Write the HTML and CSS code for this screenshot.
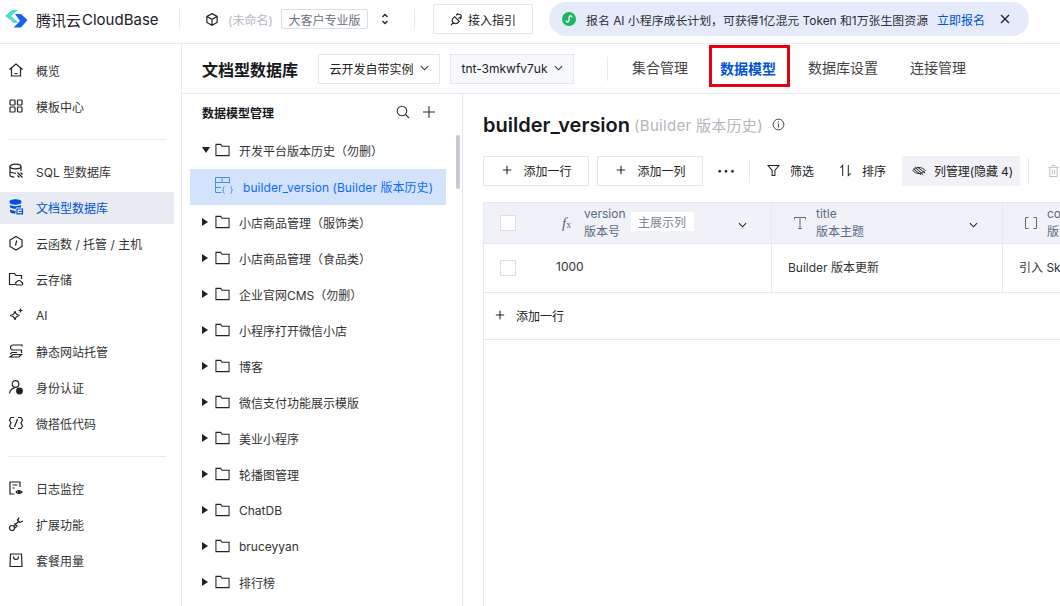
FILE: index.html
```html
<!DOCTYPE html>
<html lang="zh">
<head>
<meta charset="utf-8">
<title>CloudBase</title>
<link rel="stylesheet" href="styles.css">
</head>
<body>
<header class="top">
  <div class="brand">
    <svg class="logo" width="23" height="18" viewBox="0 0 23 18"><path d="M7 0h6L6 6l5 4.500H6L0 6z" fill="#4fdcd6"/><path d="M6 10.500h5l2 2H8z" fill="#2bc8e0"/><path d="M10 4h6l6.500 6L16 17.500H8.500L15 11z" fill="#1b62ee"/></svg>
    <span>腾讯云</span><span class="brand-en">CloudBase</span>
  </div>
  <i class="vline v1"></i>
  <svg class="cube" width="14" height="15" viewBox="0 0 15 15" fill="none" stroke="#222" stroke-width="1.300"><path d="M7.500 1.200 13 4.200v6.500l-5.500 3-5.500-3V4.200zM2 4.200l5.500 3 5.500-3M7.500 7.200v6.500"/></svg>
  <span class="env">(未命名)</span>
  <span class="plan">大客户专业版</span>
  <svg class="updown" width="10" height="14" viewBox="0 0 10 14" fill="none" stroke="#222" stroke-width="1.300"><path d="M2.500 5 5 2.500 7.500 5M2.500 9 5 11.500 7.500 9"/></svg>
  <i class="vline v2"></i>
  <button class="guide">
    <svg width="13" height="13" viewBox="0 0 14 14" fill="none" stroke="#222" stroke-width="1.200"><path d="M5 4 10 9 8.500 10.500a3.200 3.200 0 0 1-5-5zM3.500 10.500 1 13M7 2l1.500-1.500M9 6l3-2M6.500 2.500c1-1 3-1.500 5-.5 1 1.500.5 3.500-.5 5"/></svg>
    接入指引
  </button>
  <div class="banner">
    <svg class="mini" width="14" height="14" viewBox="0 0 14 14"><circle cx="7" cy="7" r="7" fill="#1fb45f"/><path d="M4 8.500a1.500 1.500 0 1 0 3 0v-3a1.500 1.500 0 1 1 3 0" fill="none" stroke="#fff" stroke-width="1.300"/></svg>
    <span class="banner-text">报名 AI 小程序成长计划，可获得1亿混元 Token 和1万张生图资源</span>
    <a class="banner-link">立即报名</a>
    <svg class="close" width="10" height="10" viewBox="0 0 10 10" stroke="#222" stroke-width="1.400"><path d="M1 1l8 8M9 1 1 9"/></svg>
  </div>
</header>

<div class="body">
  <nav class="side">
    <a class="nav"><svg viewBox="0 0 16 16"><path d="M1.500 7.500 8 2l6.500 5.500M3.500 6v8h9V6M6.500 11.500h3"/></svg>概览</a>
    <a class="nav"><svg viewBox="0 0 16 16"><rect x="2" y="2" width="5" height="5" rx=".8"/><rect x="9.500" y="2" width="4.500" height="5" rx=".8"/><rect x="2" y="9" width="5" height="5" rx=".8"/><rect x="9.500" y="9" width="4.500" height="5" rx=".8"/></svg>模板中心</a>
    <hr class="sep">
    <a class="nav"><svg viewBox="0 0 16 16"><ellipse cx="7.500" cy="3.500" rx="5.500" ry="2.300"/><path d="M2 3.500V12c0 1 2 2 4.500 2M13 3.500V8M2 8c0 1 2.500 2.300 6 2.300M9.500 9.500l5 5M12.500 9.500l2 2M9.500 12.500l2 2"/></svg>SQL 型数据库</a>
    <a class="nav active"><svg viewBox="0 0 16 16"><ellipse cx="7.500" cy="3" rx="5.500" ry="2.200" fill="#0052d9"/><path d="M2 6c2 1.500 9 1.500 11 0v2.500H8v1.300c-2.500 0-4.800-.5-6-1.500zM2 10.500c1.500 1 4 1.300 5.500 1.300V14.500c-2.500 0-4.500-.5-5.500-1.500z" fill="#0052d9" stroke="none"/><path d="M9 10h5.500v4.800H9zM11 12.500h3.500" fill="none"/></svg>文档型数据库</a>
    <a class="nav"><svg viewBox="0 0 16 16"><path d="M8 1.500 14 5v6.500L8 15l-6-3.500V5zM8.700 5.500 7.500 10.500"/></svg>云函数 / 托管 / 主机</a>
    <a class="nav"><svg viewBox="0 0 16 16"><path d="M7 13.500H1.500V2.500h5l1.500 2h5.500V8M8.500 14a1.800 1.800 0 0 1 .5-3.300 2.500 2.500 0 0 1 4.500.5A1.500 1.500 0 0 1 14 14z"/></svg>云存储</a>
    <a class="nav"><svg viewBox="0 0 16 16"><path d="M7 4c.5 3 1.500 4 4.500 4.500C8.500 9 7.500 10 7 13 6.500 10 5.500 9 2 8.500 5.500 8 6.500 7 7 4zM12.500 1.500v4M10.500 3.500h4"/></svg>AI</a>
    <a class="nav"><svg viewBox="0 0 16 16"><path d="M14 3.500V2H5a2.500 2.500 0 0 0-2.500 2.500C2.500 6 3.500 7 5 7h8.500v3M2 14l3-2.500h8.500L11 14zM2 11l2-1.500h5"/></svg>静态网站托管</a>
    <a class="nav"><svg viewBox="0 0 16 16"><circle cx="7.500" cy="5" r="3.300"/><path d="M1.500 14.500c.5-3 2.500-5 5-5.300"/><circle cx="11.500" cy="12" r="2.800" fill="#222"/></svg>身份认证</a>
    <a class="nav"><svg viewBox="0 0 16 16"><path d="M6 2.500H3L1.500 5 3 8 1.500 11 3 13.500h3M10 2.500h3L14.500 5 13 8l1.500 3-1.500 2.500h-3M9.500 4l-3 8"/></svg>微搭低代码</a>
    <hr class="sep">
    <a class="nav"><svg viewBox="0 0 16 16"><path d="M6.500 14H2V2h10v5M4.500 5h5M4.500 8h2"/><path d="M8 12c1-1.800 4.500-1.800 6 0-1.500 1.800-5 1.800-6 0z"/><circle cx="11" cy="12" r=".8" fill="#222"/></svg>日志监控</a>
    <a class="nav"><svg viewBox="0 0 16 16"><circle cx="4" cy="12" r="2.500"/><path d="M6 10 10.500 5.500M9 3.500l3.500 3.500M11 1.500 10 4M15 5l-2.500 1M6.500 7.500 9 10l-2 2"/></svg>扩展功能</a>
    <a class="nav"><svg viewBox="0 0 16 16"><path d="M2.500 2h11l.5 12.500H2zM5.500 4.500c0 4 5 4 5 0"/></svg>套餐用量</a>
  </nav>

  <div class="content">
    <div class="sub">
      <h1>文档型数据库</h1>
      <div class="select s1">云开发自带实例<svg class="chev" viewBox="0 0 10 6"><path d="M1 1l4 4 4-4"/></svg></div>
      <div class="select s2">tnt-3mkwfv7uk<svg class="chev" viewBox="0 0 10 6"><path d="M1 1l4 4 4-4"/></svg></div>
      <i class="vline v3"></i>
      <div class="tabs">
        <a class="tab">集合管理</a>
        <a class="tab current">数据模型</a>
        <a class="tab">数据库设置</a>
        <a class="tab">连接管理</a>
      </div>
    </div>

    <div class="panes">
      <aside class="tree">
        <div class="tree-head">
          <b>数据模型管理</b>
          <svg class="hicon" viewBox="0 0 14 14"><circle cx="6" cy="6" r="4.800"/><path d="M9.500 9.500 13 13"/></svg>
          <svg class="hicon plus" viewBox="0 0 14 14"><path d="M7 1v12M1 7h12"/></svg>
        </div>
        <div class="thumb"></div>
        <div class="row"><i class="tri down"></i><svg class="folder" viewBox="0 0 16 14"><path d="M1 1h5l1.500 2H15v10H1z"/></svg>开发平台版本历史（勿删）</div>
        <div class="row selected"><svg class="model" viewBox="0 0 19 18"><path d="M6.500 15.500H.5V.5h14v6M.5 5.500h14M.5 10.500h5.500M7 .5v5"/><path d="M9.500 9.500c-1 0-1 .7-1 1.700s0 1.500-1 1.800c1 .3 1 .8 1 1.800s0 1.700 1 1.700M15.500 9.500c1 0 1 .7 1 1.700s0 1.500 1 1.800c-1 .3-1 .8-1 1.800s0 1.700-1 1.700"/></svg>builder_version (Builder 版本历史)</div>
        <div class="row"><i class="tri"></i><svg class="folder" viewBox="0 0 16 14"><path d="M1 1h5l1.500 2H15v10H1z"/></svg>小店商品管理（服饰类）</div>
        <div class="row"><i class="tri"></i><svg class="folder" viewBox="0 0 16 14"><path d="M1 1h5l1.500 2H15v10H1z"/></svg>小店商品管理（食品类）</div>
        <div class="row"><i class="tri"></i><svg class="folder" viewBox="0 0 16 14"><path d="M1 1h5l1.500 2H15v10H1z"/></svg>企业官网CMS（勿删）</div>
        <div class="row"><i class="tri"></i><svg class="folder" viewBox="0 0 16 14"><path d="M1 1h5l1.500 2H15v10H1z"/></svg>小程序打开微信小店</div>
        <div class="row"><i class="tri"></i><svg class="folder" viewBox="0 0 16 14"><path d="M1 1h5l1.500 2H15v10H1z"/></svg>博客</div>
        <div class="row"><i class="tri"></i><svg class="folder" viewBox="0 0 16 14"><path d="M1 1h5l1.500 2H15v10H1z"/></svg>微信支付功能展示模版</div>
        <div class="row"><i class="tri"></i><svg class="folder" viewBox="0 0 16 14"><path d="M1 1h5l1.500 2H15v10H1z"/></svg>美业小程序</div>
        <div class="row"><i class="tri"></i><svg class="folder" viewBox="0 0 16 14"><path d="M1 1h5l1.500 2H15v10H1z"/></svg>轮播图管理</div>
        <div class="row"><i class="tri"></i><svg class="folder" viewBox="0 0 16 14"><path d="M1 1h5l1.500 2H15v10H1z"/></svg>ChatDB</div>
        <div class="row"><i class="tri"></i><svg class="folder" viewBox="0 0 16 14"><path d="M1 1h5l1.500 2H15v10H1z"/></svg>bruceyyan</div>
        <div class="row"><i class="tri"></i><svg class="folder" viewBox="0 0 16 14"><path d="M1 1h5l1.500 2H15v10H1z"/></svg>排行榜</div>
      </aside>

      <main class="main">
        <div class="title">
          <h2>builder_version</h2>
          <span class="alias">(Builder 版本历史)</span>
          <svg class="info" viewBox="0 0 14 14"><circle cx="7" cy="7" r="5.800"/><path d="M7 6v4.200M7 3.600v1.200"/></svg>
        </div>
        <div class="tools">
          <button class="tbtn"><svg viewBox="0 0 12 12"><path d="M6 1v10M1 6h10"/></svg>添加一行</button>
          <button class="tbtn"><svg viewBox="0 0 12 12"><path d="M6 1v10M1 6h10"/></svg>添加一列</button>
          <span class="dots">···</span>
          <i class="vline v4"></i>
          <span class="tool t-filter"><svg viewBox="0 0 14 14"><path d="M1 1.500h12L8.500 7v5.500h-3V7z"/></svg>筛选</span>
          <span class="tool t-sort"><svg viewBox="0 0 14 14"><path d="M1.500 4 4 1.500V13M10 1v11.500l2.500-2.500"/></svg>排序</span>
          <span class="tool t-cols"><svg viewBox="0 0 16 14"><path d="M1 7c3-4.500 11-4.500 14 0-3 4.500-11 4.500-14 0zM3 3l10 9M6 3l9 7M1.500 5l9 7"/></svg>列管理(隐藏 4)</span>
          <i class="vline v5"></i>
          <svg class="trash" viewBox="0 0 12 14"><path d="M.5 3h11M2 3v10h8V3M4 1h4M4.800 5.500v5M7.200 5.500v5"/></svg>
        </div>
        <div class="table">
          <div class="thead">
            <div class="cell c0"><i class="check"></i></div>
            <div class="cell c1">
              <span class="fx"><i>f</i><small>x</small></span>
              <div class="hname"><span>version</span><span>版本号</span></div>
              <span class="mainflag">主展示列</span>
              <svg class="chev dark" viewBox="0 0 10 6"><path d="M1 1l4 4 4-4"/></svg>
            </div>
            <div class="cell c2">
              <svg class="ticon" viewBox="0 0 12 12"><path d="M.5 2.500V.5h11v2M6 .5v11M4 11.500h4"/></svg>
              <div class="hname"><span>title</span><span>版本主题</span></div>
              <svg class="chev dark" viewBox="0 0 10 6"><path d="M1 1l4 4 4-4"/></svg>
            </div>
            <div class="cell c3">
              <svg class="ticon" viewBox="0 0 12 12"><path d="M3.500.5h-3v11h3M8.500.5h3v11h-3"/></svg>
              <div class="hname"><span>content</span><span>版本内容</span></div>
            </div>
          </div>
          <div class="tbody">
            <div class="cell c0"><i class="check"></i></div>
            <div class="cell c1 num"><span>1000</span></div>
            <div class="cell c2 txt"><span>Builder 版本更新</span></div>
            <div class="cell c3 txt"><span>引入 Skills 能力</span></div>
          </div>
          <div class="addrow"><svg viewBox="0 0 12 12"><path d="M6 1v10M1 6h10"/></svg>添加一行</div>
        </div>
      </main>
    </div>
  </div>
</div>
</body>
</html>
```

FILE: styles.css
```css
* { box-sizing: border-box; }
html, body { margin: 0; height: 100%; overflow: hidden; }
body {
  width: 1060px; height: 606px; background: #fff; color: #222;
  font-family: Inter, "Noto Sans CJK SC", sans-serif; font-size: 12px;
  display: flex; flex-direction: column;
}
button { font: inherit; color: inherit; background: #fff; cursor: pointer; }
.vline { display: block; width: 1px; background: #e6e9f0; flex: none; }

/* top bar */
.top { height: 44px; flex: none; border-bottom: 1px solid #e6e9f2; display: flex; align-items: center; padding: 0 0 5px 5px; }
.brand { display: flex; align-items: center; font-size: 15px; color: #1d2129; width: 174px; flex: none; white-space: nowrap; }
.logo { margin-right: 8px; flex: none; }
.brand-en { margin-left: 1px; font-size: 15px; }
.v1 { height: 20px; }
.cube { margin-left: 25px; flex: none; }
.env { color: #b3b8c4; margin-left: 9px; width: 53px; white-space: nowrap; flex: none; }
.plan { height: 20px; width: 87px; border: 1px solid #dcdfe8; border-radius: 2px; color: #6c7280; display: flex; align-items: center; justify-content: center; flex: none; }
.updown { margin-left: 12px; flex: none; }
.v2 { height: 20px; margin-left: 24px; }
.guide { margin-left: 18px; width: 100px; height: 30px; border: 1px solid #e3e6ef; border-radius: 2px; display: flex; align-items: center; justify-content: center; gap: 5px; flex: none; padding: 0; }
.banner { margin-left: 16px; width: 480px; height: 34px; border-radius: 17px; background: #e6ebfb; display: flex; align-items: center; padding-left: 13px; flex: none; }
.mini { flex: none; }
.banner-text { margin-left: 10px; white-space: nowrap; width: 343px; color: #2b2f36; flex: none; font-size: 11.900px; }
.banner-link { color: #0052d9; margin-left: 8px; flex: none; }
.close { margin-left: 15px; flex: none; }

/* layout */
.body { flex: 1; display: flex; min-height: 0; }
.side { width: 182px; flex: none; border-right: 1px solid #e6e9f2; padding-top: 8px; padding-right: 7px; }
.nav { height: 36px; display: flex; align-items: center; padding-left: 8px; font-size: 12px; color: #333; white-space: nowrap; }
.nav svg { width: 16px; height: 16px; margin-right: 12px; fill: none; stroke: #222; stroke-width: 1.200; flex: none; }
.nav.active { height: 32px; margin: 3px 0 1px; padding-bottom: 2px; background: #e8ebf1; color: #0052d9; }
.nav.active svg { stroke: #0052d9; }
.sep { border: 0; height: 1px; background: #e9ebf0; margin: 15px 0 13px 8px; width: 158px; }
.content { flex: 1; min-width: 0; display: flex; flex-direction: column; }
.sub { height: 50px; flex: none; border-bottom: 1px solid #e6e9f2; display: flex; align-items: center; padding-left: 20px; }
h1 { margin: 0; font-size: 16px; font-weight: 600; color: #16181d; width: 116px; flex: none; white-space: nowrap; }
.select { height: 30px; border: 1px solid #e3e6ef; display: flex; align-items: center; justify-content: center; gap: 6px; white-space: nowrap; flex: none; padding-bottom: 1px; }
.s1 { width: 122px; }
.s2 { width: 124px; margin-left: 10px; background: #f7f8fb; }
.chev { width: 9px; height: 6px; fill: none; stroke: #333; stroke-width: 1.200; flex: none; }
.v3 { height: 24px; margin-left: 33px; }
.tabs { display: flex; align-items: center; margin-left: 24px; }
.tab { font-size: 14px; color: #444; margin: 0 0 3px 32px; white-space: nowrap; flex: none; }
.tab:first-child { margin-left: 0; }
.tab.current { color: #0052d9; font-weight: 600; border: 3px solid #e60012; width: 81px; height: 42px; padding: 3px 0 0 8px; margin: 0 0 5px 21px; display: flex; align-items: center; }
.tab.current + .tab { margin-left: 18px; }
.panes { flex: 1; display: flex; min-height: 0; }

/* tree */
.tree { position: relative; width: 281px; flex: none; border-right: 1px solid #e6e9f2; padding-left: 8px; overflow: hidden; }
.tree-head { height: 38px; display: flex; align-items: center; padding: 0 0 2px 12px; }
.tree-head b { font-weight: 600; font-size: 12px; color: #16181d; width: 194px; white-space: nowrap; }
.hicon { width: 14px; height: 14px; fill: none; stroke: #333; stroke-width: 1.100; flex: none; }
.plus { margin-left: 12px; }
.thumb { position: absolute; left: 274px; top: 41px; width: 4px; height: 54px; border-radius: 2px; background: #c6c9d2; }
.row { width: 256px; height: 36px; display: flex; align-items: center; padding-left: 12px; color: #333; white-space: nowrap; }
.tri { width: 0; height: 0; border-left: 6px solid #222; border-top: 4px solid transparent; border-bottom: 4px solid transparent; margin-right: 7px; flex: none; }
.tri.down { border-left: 4px solid transparent; border-right: 4px solid transparent; border-top: 6px solid #222; border-bottom: 0; margin-left: 0; margin-right: 5px; }
.folder { width: 15px; height: 14px; fill: none; stroke: #222; stroke-width: 1.100; margin-right: 9px; flex: none; }
.selected { background: #d4e3fc; color: #0a6cff; padding: 0 0 2px 25px; margin: 1px 0 -1px; letter-spacing: .06px; }
.model { width: 19px; height: 18px; fill: none; stroke: #4f8cf0; stroke-width: 1; margin-right: 9px; flex: none; }

/* main */
.main { flex: 1; min-width: 0; padding-left: 20px; overflow: hidden; display: flex; flex-direction: column; }
.title { height: 62px; display: flex; align-items: center; padding-bottom: 1px; white-space: nowrap; flex: none; }
h2 { margin: 0; font-size: 20px; font-weight: 600; color: #16181d; }
.alias { font-size: 15px; color: #b3b6be; margin-left: 4px; letter-spacing: .3px; }
.info { width: 13px; height: 13px; fill: none; stroke: #333; stroke-width: 1; margin-left: 9px; flex: none; }
.tools { height: 30px; display: flex; align-items: center; white-space: nowrap; flex: none; }
.tbtn { width: 106px; height: 30px; border: 1px solid #e3e6ef; display: flex; align-items: center; justify-content: center; gap: 11px; margin-right: 8px; flex: none; padding: 0 0 2px 2px; }
.tbtn svg, .addrow svg { width: 10px; height: 10px; fill: none; stroke: #222; stroke-width: 1.300; flex: none; }
.dots { font-size: 16px; width: 19px; margin-left: 6px; letter-spacing: 1px; font-weight: 700; line-height: 1; flex: none; }
.v4 { height: 24px; margin-left: 13px; }
.tool { display: flex; align-items: center; height: 30px; flex: none; padding-bottom: 2px; }
.tool svg { width: 13px; height: 13px; fill: none; stroke: #222; stroke-width: 1.100; margin-right: 10px; flex: none; }
.t-filter { margin-left: 17px; }
.t-sort { margin-left: 25px; }
.t-cols { margin-left: 16px; background: #f0f2f7; width: 118px; padding-left: 10px; letter-spacing: -.1px; }
.t-cols svg { width: 14px; margin-right: 8px; }
.v5 { height: 26px; margin-left: 8px; }
.trash { width: 11px; height: 14px; fill: none; stroke: #b5b8c0; stroke-width: 1; margin-left: 19px; flex: none; }
.table { margin-top: 16px; width: 577px; flex: 1; border-left: 1px solid #e6e9f2; }
.thead, .tbody { display: flex; }
.thead { height: 42px; background: #f0f2f7; border-top: 1px solid #e6e9f2; border-bottom: 1px solid #e3e6ee; color: #5a6a85; }
.tbody { height: 49px; border-bottom: 1px solid #e6e9f2; }
.cell { display: flex; align-items: center; border-right: 1px solid #e6e9f2; flex: none; height: 100%; white-space: nowrap; position: relative; }
.c0 { width: 57px; padding-left: 16px; border-right: 0; }
.c1 { width: 231px; padding-left: 21px; }
.c2 { width: 231px; padding-left: 22px; }
.c3 { width: 120px; padding-left: 22px; border-right: 0; }
.check { display: block; width: 16px; height: 16px; background: #fff; border: 1px solid #dcdfe6; flex: none; }
.fx { font-family: "Liberation Serif", serif; font-size: 15px; color: #5a6a85; width: 22px; flex: none; }
.fx small { font-size: 10px; }
.hname { display: flex; flex-direction: column; line-height: 18px; }
.mainflag { height: 19px; width: 63px; background: #fff; color: #7b8494; margin-left: 5px; display: flex; align-items: center; justify-content: center; margin-top: -3px; flex: none; }
.chev.dark { position: absolute; right: 24px; top: 19px; stroke: #222; }
.ticon { width: 12px; height: 12px; fill: none; stroke: #5a6a85; stroke-width: 1; margin-right: 10px; flex: none; }
.num, .txt { color: #333; }
.c1.num { padding-left: 15px; }
.c2.txt, .c3.txt { padding-left: 16px; }
.num span, .txt span { margin-top: -3px; }
.addrow { height: 47px; border-bottom: 1px solid #e6e9f2; display: flex; align-items: center; gap: 11px; padding: 0 0 2px 11px; }
```
